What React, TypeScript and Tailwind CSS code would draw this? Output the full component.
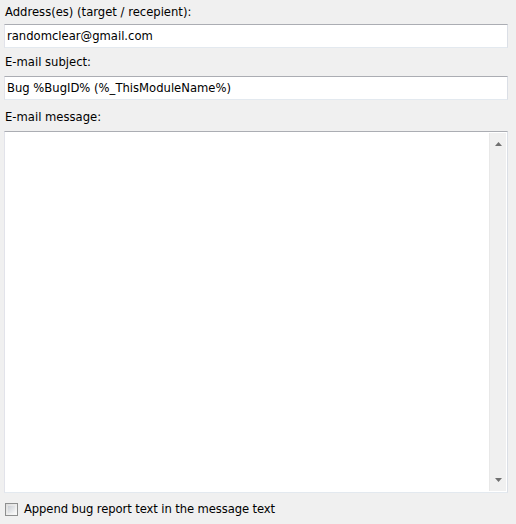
import React from "react";

function Label({ children, className }: { children: React.ReactNode; className: string }) {
  return <div className={"leading-[13px] text-[#000] " + className}>{children}</div>;
}

function TextBox({ value }: { value: string }) {
  return (
    <div className="h-[24px] bg-white border border-t-[#abadb3] border-l-[#e2e3ea] border-r-[#dbdfe6] border-b-[#e3e9ef] pl-[2px] flex items-center">
      <span className="leading-[13px] text-black">{value}</span>
    </div>
  );
}

export default function App() {
  return (
    <div className="w-[516px] h-[524px] bg-[#f0f0f0] pl-[4px] pr-[8px] font-['DejaVu_Sans',sans-serif] text-[11.6px] overflow-hidden">
      <Label className="h-[24px] pt-[6px] pl-[1px]">Address(es) (target / recepient):</Label>
      <TextBox value="randomclear@gmail.com" />
      <Label className="h-[28px] pt-[8px] pl-[1px]">E-mail subject:</Label>
      <TextBox value="Bug %BugID% (%_ThisModuleName%)" />
      <Label className="h-[31px] pt-[11px] pl-[1px]">E-mail message:</Label>
      <div className="h-[362px] bg-white border border-t-[#abadb3] border-l-[#e2e3ea] border-r-[#dbdfe6] border-b-[#e3e9ef] flex">
        <div className="flex-1" />
        <div className="w-[17px] mr-[1px] my-[1px] bg-[#f0f0f0] border-l border-[#e8e8e8] flex flex-col justify-between items-center py-[9px]">
          <svg width="7" height="4" viewBox="0 0 7 4">
            <path d="M3.5 0 L7 4 L0 4 Z" fill="#707070" />
          </svg>
          <svg width="7" height="4" viewBox="0 0 7 4">
            <path d="M0 0 L7 0 L3.5 4 Z" fill="#707070" />
          </svg>
        </div>
      </div>
      <div className="flex items-center mt-[10px] gap-[6px] pl-[1px]">
        <div className="w-[13px] h-[13px] border border-[#8e8f8f] bg-gradient-to-br from-[#dcdcdc] to-[#fbfbfb] p-[2px]">
          <div className="w-full h-full bg-gradient-to-br from-[#cbcfd5] to-[#f6f6f6]" />
        </div>
        <span className="leading-[13px] text-black tracking-[-0.1px]">Append bug report text in the message text</span>
      </div>
    </div>
  );
}
